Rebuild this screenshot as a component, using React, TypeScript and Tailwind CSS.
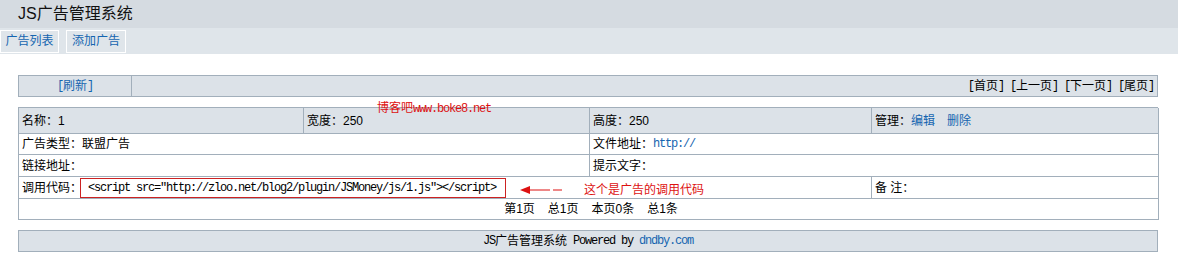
import React from 'react';

// JS广告管理系统 — 广告列表页

const sans = 'font-["Liberation_Sans","Noto_Sans_CJK_SC",sans-serif]';
// 宋体式半角西文：等宽，每字约 6px
const mono = 'font-["Liberation_Mono",monospace] tracking-[-1.2px]';

function Cell({ children, className = '' }: { children?: React.ReactNode; className?: string }) {
  return (
    <div className={`flex items-center whitespace-nowrap border-b border-r border-[#a2afbb] pl-[3px] ${className}`}>
      {children}
    </div>
  );
}

function L({ children }: { children: React.ReactNode }) {
  return <span className={mono}>{children}</span>;
}

export default function App() {
  return (
    <div className={`min-h-[268px] w-[1178px] bg-white text-[12px] leading-none text-black ${sans}`}>
      {/* ── 顶部标题 ── */}
      <div className="flex h-[28px] items-center bg-[#d5dbe1] pl-[18px] text-[16px] text-[#111]">
        JS广告管理系统
      </div>

      {/* ── 导航 ── */}
      <div className="flex h-[26px] items-center gap-[7px] bg-[#dfe5ea]">
        <a className="flex h-[23px] w-[59px] items-center justify-center border border-white text-[#1565b0]">
          广告列表
        </a>
        <a className="flex h-[23px] w-[60px] items-center justify-center border border-white text-[#1565b0]">
          添加广告
        </a>
      </div>

      <div className="flex flex-col gap-[10px] px-[18px] pt-[21px]">
        {/* ── 工具栏 ── */}
        <div className="flex h-[22px] w-[1140px] border border-[#a2afbb] bg-[#dce2e8]">
          <div className="flex w-[113px] items-center justify-center border-r border-[#a2afbb] text-[#1565b0]">
            <L>[</L>刷新<L>]</L>
          </div>
          <div className="flex flex-1 items-center justify-end whitespace-pre pr-[3px]">
            <L>[</L>首页<L>] [</L>上一页<L>] [</L>下一页<L>] [</L>尾页<L>]</L>
          </div>
        </div>

        {/* ── 广告详情 ── */}
        <div className="relative w-[1140px]">
          <div className="grid grid-cols-[285px_286px_282px_287px] border-l border-t border-[#a2afbb]">
            <Cell className="h-[26px] bg-[#dce2e8]">名称：1</Cell>
            <Cell className="h-[26px] bg-[#dce2e8]">宽度：250</Cell>
            <Cell className="h-[26px] bg-[#dce2e8]">高度：250</Cell>
            <Cell className="h-[26px] bg-[#dce2e8]">
              管理：<span className="text-[#1565b0]">编辑</span>
              <span className="ml-[12px] text-[#1565b0]">删除</span>
            </Cell>

            <Cell className="col-span-2 h-[21px]">广告类型：联盟广告</Cell>
            <Cell className="col-span-2 h-[21px]">
              文件地址：<span className={`text-[#1565b0] ${mono}`}>http://</span>
            </Cell>

            <Cell className="col-span-2 h-[22px]">链接地址：</Cell>
            <Cell className="col-span-2 h-[22px]">提示文字：</Cell>

            <Cell className="col-span-3 h-[22px]">
              调用代码：
              <span className="-ml-[2px] flex h-[20px] w-[426px] items-center border border-[#cc2222] pl-[7px]">
                <L>&lt;script src="http://zloo.net/blog2/plugin/JSMoney/js/1.js"&gt;&lt;/script&gt;</L>
              </span>
            </Cell>
            <Cell className="h-[22px]">备&nbsp;注：</Cell>

            <Cell className="col-span-4 h-[21px] justify-center pl-0">
              <span className="flex gap-[13px] pl-[2px]">
                <span>第1页</span>
                <span>总1页</span>
                <span>本页0条</span>
                <span>总1条</span>
              </span>
            </Cell>
          </div>

          {/* 标注 */}
          <span className="absolute left-[359px] top-[-5px] whitespace-nowrap text-[#dd1111]">
            博客吧<L>www.boke8.net</L>
          </span>
          <div className="absolute left-[502px] top-[77px] flex items-center gap-[22px] text-[#dd1111]">
            <svg width="42" height="8" viewBox="0 0 42 8" aria-hidden="true">
              <polygon points="0,4 10,0 10,8" fill="#dd1111" />
              <line x1="9" y1="4" x2="30" y2="4" stroke="#dd1111" strokeWidth="1" />
              <line x1="33" y1="4" x2="42" y2="4" stroke="#dd1111" strokeWidth="1" />
            </svg>
            <span>这个是广告的调用代码</span>
          </div>
        </div>

        {/* ── 页脚 ── */}
        <div className="flex h-[22px] w-[1140px] items-center justify-center whitespace-pre border border-[#a2afbb] bg-[#dce2e8]">
          <L>JS</L>广告管理系统<L> Powered by </L>
          <span className={`text-[#1565b0] ${mono}`}>dndby.com</span>
        </div>
      </div>
    </div>
  );
}
